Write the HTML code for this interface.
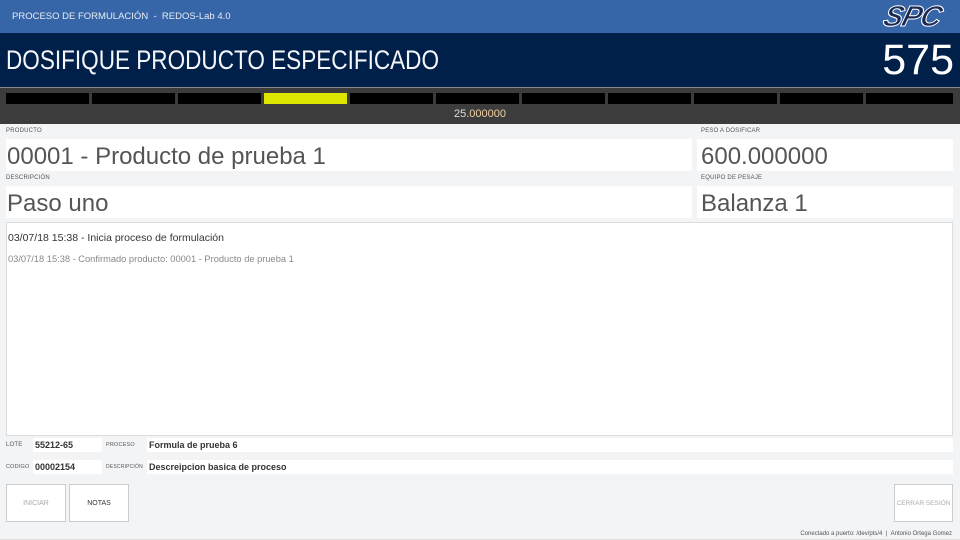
<!DOCTYPE html>
<html><head><meta charset="utf-8"><style>
*{margin:0;padding:0;box-sizing:border-box}
body{width:960px;height:540px;overflow:hidden;background:#f3f4f6;font-family:"Liberation Sans","DejaVu Sans",sans-serif;position:relative}
.a{position:absolute}
.lbl{font-size:6px;color:#555;letter-spacing:0.2px;white-space:nowrap}
.box{background:#fff}
.big{font-size:24px;color:#555;padding-left:1px;padding-top:2px;line-height:32px;font-weight:300}
.seg{position:absolute;top:93px;height:11px;width:83px;background:#000}
.btn{position:absolute;top:484px;height:38px;background:#fff;border:1px solid #ccc;font-size:7px;display:flex;align-items:center;justify-content:center;white-space:nowrap}
</style></head><body>
<div class="a" style="left:0;top:0;width:960px;height:33px;background:#3766a8"></div>
<div class="a" style="left:12px;top:11px;font-size:9.5px;color:#e6ecf5">PROCESO DE FORMULACIÓN &nbsp;- &nbsp;REDOS-Lab 4.0</div>
<div class="a" style="left:884px;top:1px;font-size:29px;font-style:italic;font-weight:bold;color:#1a2a55;-webkit-text-stroke:1px #fff;letter-spacing:-1px;transform:skewX(-15deg)">SPC</div>
<div class="a" style="left:0;top:33px;width:960px;height:54px;background:#00204a"></div>
<div class="a" style="left:6px;top:45px;font-size:27px;color:#f4f6fa;font-weight:300;transform:scaleX(0.835);transform-origin:left top;white-space:nowrap">DOSIFIQUE PRODUCTO ESPECIFICADO</div>
<div class="a" style="right:6px;top:36px;font-size:43px;color:#fff;font-weight:300">575</div>
<div class="a" style="left:0;top:87px;width:960px;height:37px;background:#3c3c3c;border-top:1px solid #888"></div>
<div class="seg" style="left:6px"></div><div class="seg" style="left:92px"></div><div class="seg" style="left:178px"></div>
<div class="seg" style="left:264px;background:#dde600"></div><div class="seg" style="left:350px"></div><div class="seg" style="left:436px"></div>
<div class="seg" style="left:522px"></div><div class="seg" style="left:608px"></div><div class="seg" style="left:694px"></div>
<div class="seg" style="left:780px"></div><div class="seg" style="left:866px;width:87px"></div>
<div class="a" style="left:0;width:960px;top:108px;text-align:center;font-size:11px;color:#ddd">25.<span style="color:#f0d0a0">000000</span></div>
<div class="a lbl" style="left:6px;top:128px">PRODUCTO</div>
<div class="a box big" style="left:6px;top:139px;width:686px;height:32px">00001 - Producto de prueba 1</div>
<div class="a lbl" style="left:701px;top:128px">PESO A DOSIFICAR</div>
<div class="a box big" style="left:697px;top:139px;width:256px;height:32px;padding-left:4px">600.000000</div>
<div class="a lbl" style="left:6px;top:175px">DESCRIPCIÓN</div>
<div class="a box big" style="left:6px;top:186px;width:686px;height:32px">Paso uno</div>
<div class="a lbl" style="left:701px;top:175px">EQUIPO DE PESAJE</div>
<div class="a box big" style="left:697px;top:186px;width:256px;height:32px;padding-left:4px">Balanza 1</div>
<div class="a box" style="left:6px;top:222px;width:947px;height:214px;border:1px solid #ddd"></div>
<div class="a" style="left:8px;top:232px;font-size:10.5px;color:#333">03/07/18 15:38 - Inicia proceso de formulación</div>
<div class="a" style="left:8px;top:254px;font-size:9.3px;color:#888">03/07/18 15:38 - Confirmado producto: 00001 - Producto de prueba 1</div>
<div class="a lbl" style="left:6px;top:442px">LOTE</div>
<div class="a box" style="left:33px;top:438px;width:69px;height:14px;font-size:9px;font-weight:bold;color:#333;padding:2px 2px">55212-65</div>
<div class="a lbl" style="left:106px;top:442px;font-size:5.5px">PROCESO</div>
<div class="a box" style="left:147px;top:438px;width:806px;height:14px;font-size:9px;font-weight:bold;color:#333;padding:2px 2px">Formula de prueba 6</div>
<div class="a lbl" style="left:6px;top:464px;font-size:5.5px">CODIGO</div>
<div class="a box" style="left:33px;top:460px;width:69px;height:14px;font-size:9px;font-weight:bold;color:#333;padding:2px 2px">00002154</div>
<div class="a lbl" style="left:106px;top:464px;font-size:5px">DESCRIPCIÓN</div>
<div class="a box" style="left:147px;top:460px;width:806px;height:14px;font-size:9px;font-weight:bold;color:#333;padding:2px 2px">Descreipcion basica de proceso</div>
<div class="btn" style="left:6px;width:60px;color:#aaa">INICIAR</div>
<div class="btn" style="left:69px;width:60px;color:#333">NOTAS</div>
<div class="btn" style="left:894px;width:59px;color:#aaa;font-size:6.5px">CERRAR SESIÓN</div>
<div class="a" style="right:8px;top:531px;font-size:6px;color:#555;white-space:nowrap">Conectado a puerto: /dev/pts/4 &nbsp;| &nbsp;Antonio Ortega Gomez</div>
<div class="a" style="left:0;top:539px;width:960px;height:1px;background:#ddd"></div>
</body></html>
